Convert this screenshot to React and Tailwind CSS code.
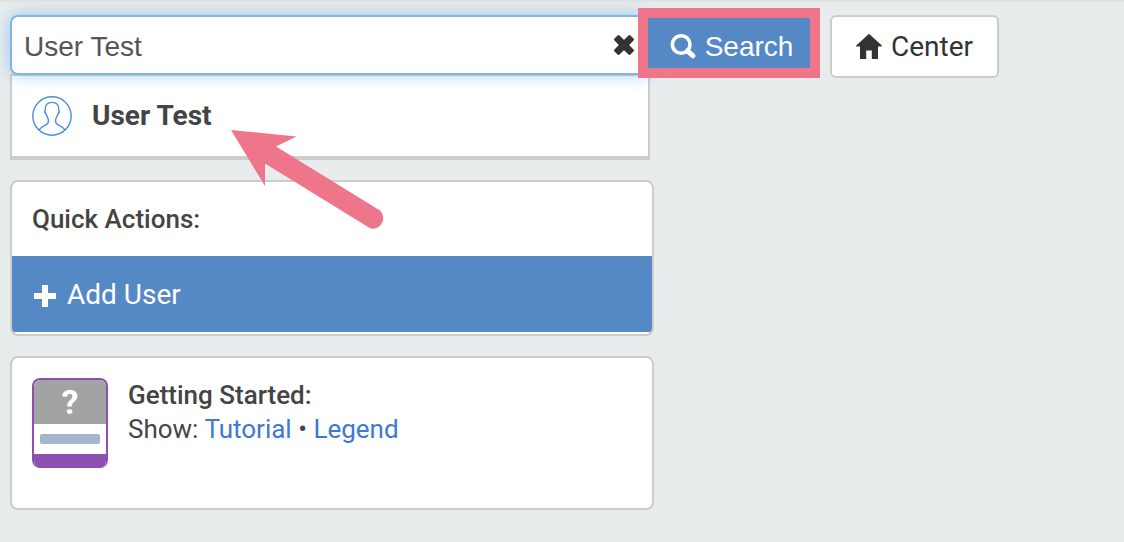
import { useState } from 'react';

function SearchIcon() {
  return (
    <svg className="h-7 w-7 shrink-0" viewBox="0 0 28 28" fill="none" stroke="#fff" aria-hidden="true">
      <circle cx="12.200" cy="11.500" r="8.800" strokeWidth="3.600" />
      <path d="M18.500 17.800l5.500 5" strokeWidth="5" strokeLinecap="round" />
    </svg>
  );
}

function ClearIcon() {
  return (
    <svg className="h-6 w-6" viewBox="0 0 24 24" fill="#333" stroke="#333" strokeWidth="2" strokeLinejoin="round" aria-hidden="true">
      <path d="M6.500 3L12 8.300 17.500 3 21 6.500 15.800 12 21 17.500 17.500 21 12 15.700 6.500 21 3 17.500 8.200 12 3 6.500z" />
    </svg>
  );
}

function HomeIcon() {
  return (
    <svg className="h-7 w-7 shrink-0" viewBox="0 0 28 28" fill="#333" aria-hidden="true">
      <path d="M14 .8L26.800 12.600v1H23V26h-6.200v-8.400h-5.600V26H5V13.600H1.200v-1z" />
    </svg>
  );
}

function PlusIcon() {
  return (
    <svg className="h-6 w-6 shrink-0" viewBox="0 0 24 24" fill="#fff" aria-hidden="true">
      <path d="M10 2h6v8h8v6h-8v8h-6v-8H2v-6h8z" />
    </svg>
  );
}

function UserIcon() {
  return (
    <svg className="h-10 w-10 shrink-0" viewBox="0 0 40 40" fill="none" stroke="#4a8fd8" strokeWidth="1.400" aria-hidden="true">
      <circle cx="20" cy="20" r="19.200" />
      <path d="M7 34.500c1.200-2.600 4-4.400 6.800-5.600 1.900-.8 2.700-2.300 2.700-4.400 0-2.100-2-4.100-2.300-6.700-1.500-.8-1.600-2.700-.9-4.100-.6-4.700 2.200-7.300 6.700-7.300s7.300 2.600 6.700 7.300c.7 1.400.6 3.300-.9 4.100-.3 2.600-2.300 4.600-2.300 6.700 0 2.100.8 3.600 2.700 4.400 2.800 1.200 5.600 3 6.800 5.600" />
    </svg>
  );
}

function HelpCardIcon() {
  return (
    <div className="flex h-[90px] w-[76px] shrink-0 flex-col overflow-hidden rounded-lg border-2 border-b-0 border-[#8e50b0] bg-white">
      <div className="flex h-11 items-center justify-center bg-[#a3a3a3] text-[34px] font-bold text-white">
        ?
      </div>
      <div className="flex flex-1 items-center px-1.5">
        <div className="h-2.5 w-full rounded-xs bg-[#a3b6ce]" />
      </div>
      <div className="h-3.5 bg-[#8e50b0]" />
    </div>
  );
}

function Arrow() {
  return (
    <svg
      className="pointer-events-none absolute top-32 left-[231px] z-20 h-[102px] w-[154px]"
      viewBox="0 0 154 102"
      fill="#ee758a"
      aria-hidden="true"
    >
      <path d="M0 0L65.500 6.500L45 16.500L149 80.500A10.600 10.600 0 0 1 139.500 98.500L34 33.500V56z" />
    </svg>
  );
}

export default function App() {
  const [busqueda, setBusqueda] = useState('User Test');

  return (
    <div className="relative min-h-screen border-t-2 border-[#dfe3e4] bg-[#e8eced] px-2.5 pt-[13px] pb-8 font-[Roboto,sans-serif] text-[#444]">
      {/* Buscador */}
      <form className="flex items-start" onSubmit={(e) => e.preventDefault()}>
        <div className="relative w-full max-w-[638px]">
          <input
            type="text"
            aria-label="Search users"
            value={busqueda}
            onChange={(e) => setBusqueda(e.target.value)}
            className="relative z-10 block h-[60px] w-full rounded-l-lg border-2 border-r-0 border-[#80b5ec] bg-white pt-1 pr-12 pl-3 font-['Liberation_Sans',sans-serif] text-[28px] text-[#555] shadow-[0_0_16px_rgba(102,175,233,0.6)] outline-none"
          />
          <button
            type="button"
            aria-label="Clear"
            onClick={() => setBusqueda('')}
            className="absolute top-[18px] right-3 z-10"
          >
            <ClearIcon />
          </button>

          {/* Resultados */}
          <ul className="absolute top-[59px] left-0 w-[calc(100%+2px)] border-2 border-b-4 border-[#ccc] bg-white">
            <li>
              <a href="#user" className="flex h-20 items-center gap-5 px-5 text-[28px] font-bold">
                <UserIcon />
                User Test
              </a>
            </li>
          </ul>
        </div>

        <div className="relative z-20 shrink-0">
          <button
            type="submit"
            className="flex h-[60px] w-[162px] items-center justify-center gap-2 bg-[#5589c5] pt-1 pl-1 font-['Liberation_Sans',sans-serif] text-[28px] text-white"
          >
            <SearchIcon />
            Search
          </button>
          <div className="pointer-events-none absolute -inset-x-2.5 -top-[7px] -bottom-[3px] border-10 border-[#ee758a]" />
        </div>

        <button
          type="button"
          className="ml-5 flex h-[63px] shrink-0 items-center gap-2 rounded-md border-2 border-[#ccc] bg-white pr-6 pl-[23px] text-[28px] text-[#333]"
        >
          <HomeIcon />
          Center
        </button>
      </form>

      {/* Acciones */}
      <section className="mt-[102px] max-w-[644px] overflow-hidden rounded-lg border-2 border-[#ccc] bg-white pb-0.5">
        <h2 className="px-5 py-[19px] text-[26px] leading-9 font-medium">Quick Actions:</h2>
        <button type="button" className="flex h-[76px] w-full items-center gap-[11px] bg-[#5589c5] px-5 pt-0.5 text-[28px] text-white">
          <PlusIcon />
          Add User
        </button>
      </section>

      {/* Ayuda */}
      <section className="mt-5 flex min-h-[154px] max-w-[644px] gap-5 rounded-lg border-2 border-[#ccc] bg-white p-5">
        <HelpCardIcon />
        <div className="text-[26px] leading-[34px]">
          <h2 className="font-medium">Getting Started:</h2>
          <p>
            Show: <a href="#tutorial" className="text-[#3b78d8]">Tutorial</a> •{' '}
            <a href="#legend" className="text-[#3b78d8]">Legend</a>
          </p>
        </div>
      </section>

      <Arrow />
    </div>
  );
}
